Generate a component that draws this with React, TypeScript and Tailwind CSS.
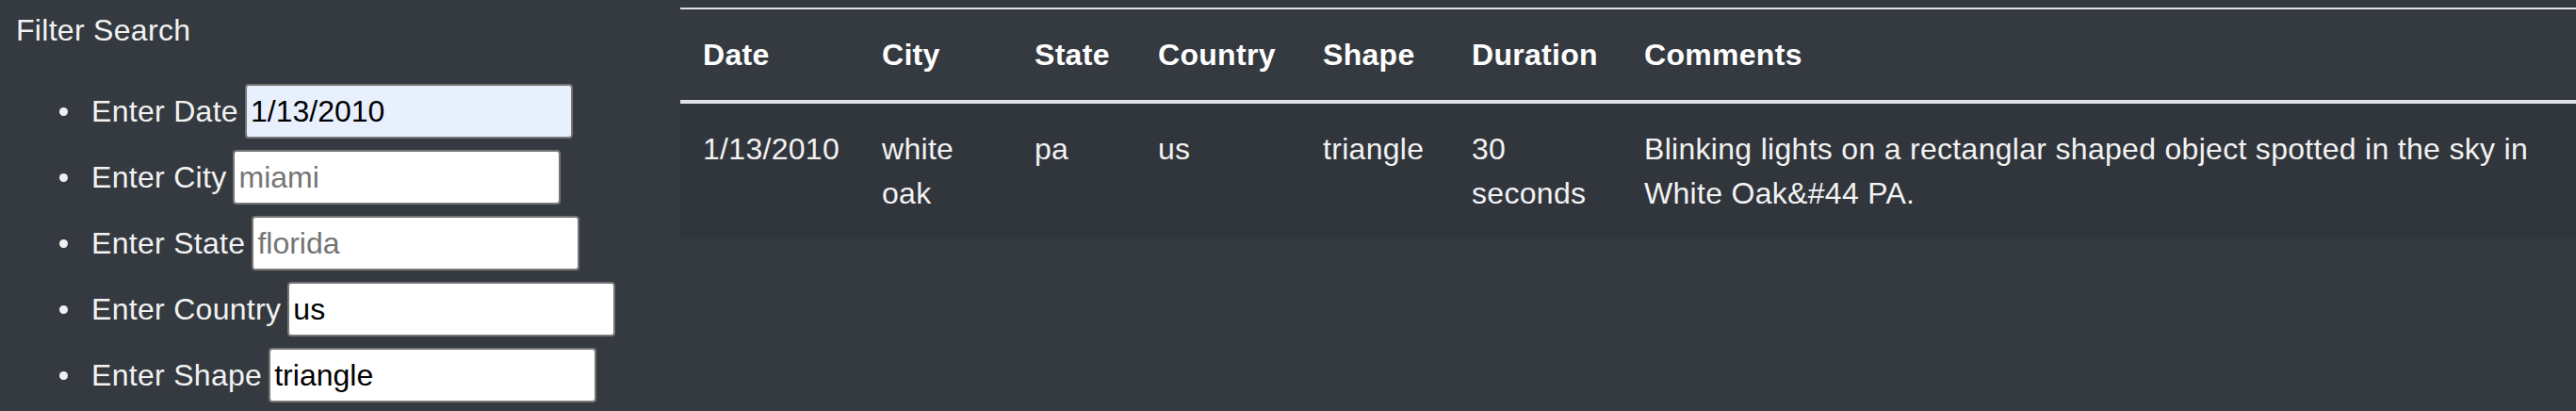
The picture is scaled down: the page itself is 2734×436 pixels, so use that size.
import { useState } from "react";

type Sighting = {
  datetime: string;
  city: string;
  state: string;
  country: string;
  shape: string;
  durationMinutes: string;
  comments: string;
};

const data: Sighting[] = [
  {
    datetime: "1/13/2010",
    city: "white oak",
    state: "pa",
    country: "us",
    shape: "triangle",
    durationMinutes: "30 seconds",
    comments:
      "Blinking lights on a rectanglar shaped object spotted in the sky in White Oak&#44 PA.",
  },
];

const columns = [
  { label: "Date", w: "w-[190px]" },
  { label: "City", w: "w-[162px]" },
  { label: "State", w: "w-[131px]" },
  { label: "Country", w: "w-[175px]" },
  { label: "Shape", w: "w-[158px]" },
  { label: "Duration", w: "w-[183px]" },
  { label: "Comments", w: "" },
];

const filters = [
  { id: "datetime", label: "Enter Date", value: "1/13/2010", placeholder: "1/11/2011", autofill: true },
  { id: "city", label: "Enter City", value: "", placeholder: "miami" },
  { id: "state", label: "Enter State", value: "", placeholder: "florida" },
  { id: "country", label: "Enter Country", value: "us", placeholder: "us" },
  { id: "shape", label: "Enter Shape", value: "triangle", placeholder: "circle" },
];

const FilterItem = ({
  id,
  label,
  initial,
  placeholder,
  autofill,
}: {
  id: string;
  label: string;
  initial: string;
  placeholder: string;
  autofill?: boolean;
}) => {
  const [val, setVal] = useState(initial);

  return (
    <li className="flex items-center h-[58px]">
      <span className="w-[9px] h-[9px] rounded-full bg-[#f0f0f0] ml-[63px] mr-[25px]" />
      <label htmlFor={id} className="whitespace-nowrap mr-[7px]">
        {label}
      </label>
      <input
        id={id}
        type="text"
        value={val}
        placeholder={placeholder}
        onChange={(e) => setVal(e.target.value)}
        className={`w-[348px] h-[58px] border-2 border-[#767676] rounded-[4px] px-[4px] text-black tracking-normal placeholder:text-[#757575] outline-none ${
          autofill ? "bg-[#e8f0fe]" : "bg-white"
        }`}
      />
    </li>
  );
};

const App = () => {
  return (
    <div
      className="w-full h-[436px] flex bg-[#343a40] text-[#f2f2f2] text-[32px] tracking-[0.3px] leading-[47px] overflow-hidden"
      style={{ fontFamily: '"Liberation Sans", Arial, sans-serif' }}
    >
      <div className="w-[722px] shrink-0 flex flex-col pt-[9px]">
        <span className="pl-[17px]">Filter Search</span>

        <ul className="flex flex-col gap-[12px] mt-[33px]">
          {filters.map((f) => (
            <FilterItem
              key={f.id}
              id={f.id}
              label={f.label}
              initial={f.value}
              placeholder={f.placeholder}
              autofill={f.autofill}
            />
          ))}
        </ul>
      </div>

      <div className="flex-1 min-w-0 pt-[8px]">
        <table className="w-full table-fixed border-collapse text-left">
          <thead>
            <tr className="border-t-2 border-[#dee2e6]">
              {columns.map((c) => (
                <th
                  key={c.label}
                  className={`${c.w} pl-[24px] pr-[12px] pt-[25px] pb-[24px] font-bold text-white border-b-4 border-[#dee2e6] align-bottom`}
                >
                  {c.label}
                </th>
              ))}
            </tr>
          </thead>
          <tbody>
            {data.map((row, i) => (
              <tr key={i} className="bg-[#31353c]">
                {[
                  row.datetime,
                  row.city,
                  row.state,
                  row.country,
                  row.shape,
                  row.durationMinutes,
                  row.comments,
                ].map((v, j) => (
                  <td key={j} className="pl-[24px] pr-[12px] pt-[25px] pb-[24px] align-top">
                    {v}
                  </td>
                ))}
              </tr>
            ))}
          </tbody>
        </table>
      </div>
    </div>
  );
};

export default App;
